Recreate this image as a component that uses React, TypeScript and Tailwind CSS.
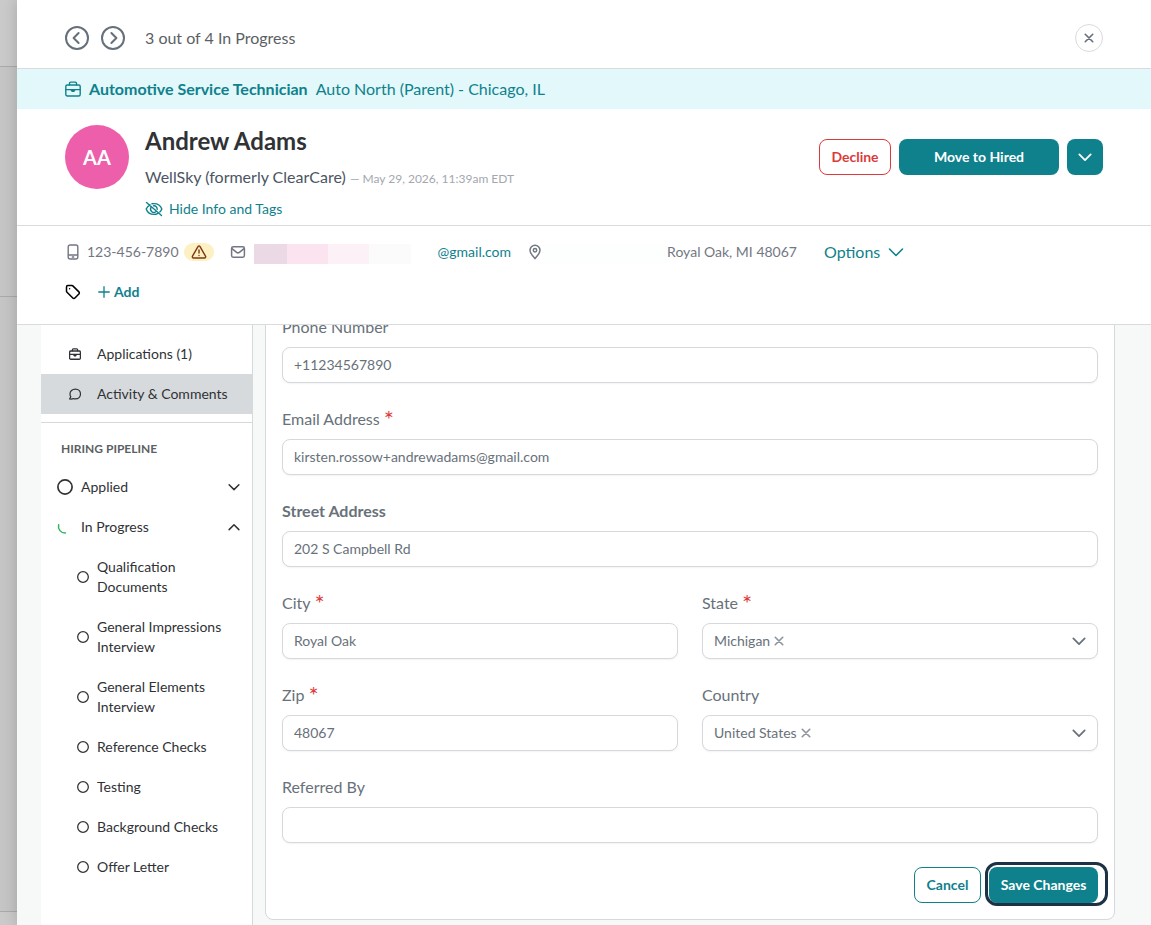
import { ReactNode } from 'react';

const stages = [
  'Qualification Documents',
  'General Impressions Interview',
  'General Elements Interview',
  'Reference Checks',
  'Testing',
  'Background Checks',
  'Offer Letter',
];

function Icon({ className, width = 1.5, children }: { className: string; width?: number; children: ReactNode }) {
  return (
    <svg
      viewBox="0 0 16 16"
      className={`shrink-0 ${className}`}
      fill="none"
      stroke="currentColor"
      strokeWidth={width}
      strokeLinecap="round"
      strokeLinejoin="round"
      aria-hidden="true"
    >
      {children}
    </svg>
  );
}

function Briefcase({ className, width = 1.4 }: { className: string; width?: number }) {
  return (
    <Icon className={className} width={width}>
      <rect x="0.8" y="4" width="14.4" height="11" rx="1.5" />
      <path d="M4.500 3.800V2.300a1.200 1.200 0 0 1 1.200-1.200h4.600a1.200 1.200 0 0 1 1.200 1.200v1.500M1 8.600h14" />
      <path d="M6.200 8.800h3.600L8.800 10.400H7.200z" fill="currentColor" />
    </Icon>
  );
}

function Chevron({ className, up, width = 1.6 }: { className: string; up?: boolean; width?: number }) {
  return (
    <Icon className={className} width={width}>
      <path d={up ? 'M1.500 11.500L8 5l6.500 6.500' : 'M1.500 5L8 11.500 14.500 5'} />
    </Icon>
  );
}

function Cross({ className }: { className: string }) {
  return (
    <Icon className={className} width={2.6}>
      <path d="M2 2l12 12M14 2L2 14" />
    </Icon>
  );
}

function Ring({ className }: { className: string }) {
  return (
    <Icon className={className} width={1.7}>
      <circle cx="8" cy="8" r="7.1" />
    </Icon>
  );
}

function Label({ id, text, required, bold }: { id: string; text: string; required?: boolean; bold?: boolean }) {
  return (
    <label htmlFor={id} className={`flex h-6 items-center gap-1 text-base leading-6 ${bold ? 'font-bold' : ''}`}>
      {text}
      {required && <span className="text-2xl leading-6 text-[#e03c3c]">*</span>}
    </label>
  );
}

type FieldProps = { id: string; label: string; value: string; required?: boolean; bold?: boolean };

function TextField({ id, label, value, required, bold }: FieldProps) {
  return (
    <div className="flex flex-col gap-2">
      <Label id={id} text={label} required={required} bold={bold} />
      <input
        id={id}
        defaultValue={value}
        className="h-9 w-full rounded-lg border border-[#d5d8dc] bg-white px-[11px] pb-[2px] text-sm shadow-xs"
      />
    </div>
  );
}

function SelectField({ id, label, value, required }: FieldProps) {
  return (
    <div className="flex flex-col gap-2">
      <Label id={id} text={label} required={required} />
      <div className="flex h-9 items-center rounded-lg border border-[#d5d8dc] bg-white px-[11px] text-sm shadow-xs">
        <select id={id} className="appearance-none bg-transparent [field-sizing:content]">
          <option>{value}</option>
        </select>
        <button type="button" aria-label={`Clear ${label}`} className="ml-1 text-[#8d949b]">
          <Cross className="size-[10px]" />
        </button>
        <Chevron className="ml-auto size-[14px]" width={2} />
      </div>
    </div>
  );
}

export default function App() {
  return (
    <div className="relative flex min-h-screen bg-[#c4c5c4] pl-[17px] font-['Lato',sans-serif] text-[#303236]">
      {/* page behind the drawer */}
      <div className="absolute inset-y-0 left-0 flex w-[17px] flex-col">
        <div className="h-[67px] border-b border-[#aaaaaa] bg-[#cacaca]" />
        <div className="h-[230px] border-b border-[#aaaaaa]" />
        <div className="flex-1" />
        <div className="h-[14px] border-t border-[#aaaaaa] bg-[#cacaca]" />
      </div>

      <section className="relative flex min-w-0 flex-1 flex-col bg-white shadow-[0_0_14px_rgba(0,0,0,0.18)]">
        <header className="flex items-center border-b border-[#d9dbdd] px-12 pt-6 pb-4">
          <div className="flex items-center gap-3 text-[#65707b]">
            <button type="button" aria-label="Previous">
              <svg viewBox="0 0 24 24" className="size-6" fill="none" stroke="currentColor" strokeWidth="2" strokeLinecap="round" strokeLinejoin="round">
                <circle cx="12" cy="12" r="11" />
                <path d="M13.600 7l-5 5 5 5" />
              </svg>
            </button>
            <button type="button" aria-label="Next">
              <svg viewBox="0 0 24 24" className="size-6" fill="none" stroke="currentColor" strokeWidth="2" strokeLinecap="round" strokeLinejoin="round">
                <circle cx="12" cy="12" r="11" />
                <path d="M10.400 7l5 5-5 5" />
              </svg>
            </button>
          </div>
          <p className="ml-5 text-base leading-6 text-[#5c5f64]">3 out of 4 In Progress</p>
          <button type="button" aria-label="Close" className="ml-auto flex size-7 items-center justify-center rounded-full border border-[#d9dbdd] text-[#65707b]">
            <Cross className="size-[10px]" />
          </button>
        </header>

        <div className="flex h-10 items-center gap-2 bg-[#e2f8fa] px-12 text-base text-[#0f818d]">
          <Briefcase className="size-4" />
          <strong className="font-bold">Automotive Service Technician</strong>
          <span>Auto North (Parent) - Chicago, IL</span>
        </div>

        <div className="flex gap-4 border-b border-[#d9dbdd] px-12 pt-4 pb-1">
          <div className="flex size-16 items-center justify-center rounded-full bg-[#ed5fab] text-xl font-bold text-white">AA</div>
          <div>
            <h1 className="text-2xl leading-8 font-bold">Andrew Adams</h1>
            <p className="mt-2 text-base leading-6 text-[#4b5563]">
              WellSky (formerly ClearCare) <span className="text-xs text-[#a3a8ae]">— May 29, 2026, 11:39am EDT</span>
            </p>
            <button type="button" className="mt-2 flex h-6 items-center gap-[6px] text-sm text-[#0f818d]">
              <svg viewBox="0 0 18 16" className="h-4 w-[18px]" fill="none" stroke="currentColor" strokeWidth="1.4" strokeLinecap="round" strokeLinejoin="round">
                <path d="M1.500 1.500l15 13M5 3.800C3.200 4.800 1.800 6.300 1.200 8c1.200 3.300 4.300 5.400 7.800 5.400 1.300 0 2.500-.3 3.600-.8M7 2.800c.6-.1 1.300-.2 2-.2 3.500 0 6.600 2.100 7.800 5.400-.4 1.100-1.100 2.100-2 2.900" />
                <path d="M6.200 6.200a3.300 3.300 0 0 0 4.600 4.600M8.600 4.800a3.300 3.300 0 0 1 3.600 3.600" />
              </svg>
              Hide Info and Tags
            </button>
          </div>
          <div className="ml-auto flex h-16 items-center gap-2 text-sm font-bold">
            <button type="button" className="h-9 w-18 rounded-lg border border-[#dc3a3a] text-[#dc3a3a]">Decline</button>
            <button type="button" className="h-9 w-40 rounded-lg bg-[#0f818d] text-white">Move to Hired</button>
            <button type="button" aria-label="More actions" className="flex size-9 items-center justify-center rounded-lg bg-[#0f818d] text-white">
              <Chevron className="size-[14px]" width={2} />
            </button>
          </div>
        </div>

        <div className="border-b border-[#d9dbdd] px-12 pt-[14px] pb-5">
          <div className="flex h-6 items-center text-sm text-[#737782]">
            <Icon className="size-4" width={1.4}>
              <rect x="3.200" y="1" width="9.600" height="14" rx="2" />
              <path d="M3.500 11h9M7.300 13h1.400" />
            </Icon>
            <span className="ml-[6px]">123-456-7890</span>
            <span className="ml-[5px] flex h-[18px] w-[30px] items-center justify-center rounded-full bg-[#fdf0c3] text-[#7c3a14]">
              <Icon className="size-4" width={1.4}>
                <path d="M7.100 2.400L1.500 12.200a1.200 1.200 0 0 0 1 1.800h11a1.200 1.200 0 0 0 1-1.800L8.900 2.400a1.100 1.100 0 0 0-1.800 0zM8 6v3M8 11.500v.1" />
              </Icon>
            </span>
            <Icon className="ml-4 size-4" width={1.5}>
              <rect x="1.600" y="2.800" width="12.800" height="10.400" rx="1.600" />
              <path d="M2 4.600l4.600 3.700a2.200 2.200 0 0 0 2.800 0L14 4.600" />
            </Icon>
            {/* redacted part of the address */}
            <span className="mt-1 ml-2 flex h-5 w-[184px]">
              <span className="w-[33px] bg-[#ecd9e6]" />
              <span className="w-[41px] bg-[#fbe3f0]" />
              <span className="w-[41px] bg-[#fcf1f7]" />
              <span className="w-[42px] bg-[#fcfbfc]" />
            </span>
            <a href="mailto:kirsten.rossow+andrewadams@gmail.com" className="text-[#0f818d]">@gmail.com</a>
            <Icon className="ml-4 size-4" width={1.5}>
              <path d="M8 14.600c-1.800-2.200-5-5.100-5-8.400a5 5 0 0 1 10 0c0 3.300-3.200 6.200-5 8.400z" />
              <circle cx="8" cy="6.300" r="1.700" />
            </Icon>
            <span className="mt-1 h-5 w-[124px] bg-[#fdfefe]" />
            <span>Royal Oak, MI 48067</span>
            <button type="button" className="ml-[27px] flex items-center gap-2 text-base text-[#0f818d]">
              Options
              <Chevron className="size-4" />
            </button>
          </div>
          <div className="mt-4 flex h-6 items-center">
            <Icon className="size-4 text-black" width={1.5}>
              <path d="M1.500 2.900v4.300c0 .4.200.8.500 1.100l5.800 5.700c.6.600 1.500.6 2.100 0l4-4c.6-.6.6-1.500 0-2.100L8.100 2.100c-.3-.3-.7-.5-1.100-.5H2.800c-.7 0-1.300.6-1.300 1.300zM4.600 4.700v.1" />
            </Icon>
            <button type="button" className="ml-4 flex items-center gap-[3px] text-sm font-bold text-[#0f818d]">
              <Icon className="size-[14px]">
                <path d="M8 2v12M2 8h12" />
              </Icon>
              Add
            </button>
          </div>
        </div>

        <div className="flex flex-1 overflow-hidden bg-[#f7f9f8] pr-9 pl-6">
          <nav className="w-53 shrink-0 border-r border-[#d5d8dc] bg-white pt-[9px] text-sm leading-5">
            <a href="#applications" className="flex h-10 items-center pl-7">
              <Briefcase className="size-3" width={1.7} />
              <span className="ml-4">Applications (1)</span>
            </a>
            <a href="#activity" className="flex h-10 items-center bg-[#d6dadd] pl-7">
              <Icon className="size-3" width={1.6}>
                <path d="M8.500 1.500C4.300 1.500 1.300 4.300 1.300 7.900c0 1.700.6 2.900 1.100 3.600L.8 14.600c2.500.4 4.100.1 5-.5.8.3 1.800.4 2.700.4 4.100 0 6.800-2.900 6.800-6.500s-2.800-6.500-6.800-6.500z" />
              </Icon>
              <span className="ml-4">Activity &amp; Comments</span>
            </a>
            <div className="mt-2 border-t border-[#d5d8dc] pt-4">
              <h2 className="pb-2 pl-5 text-xs leading-5 font-bold text-[#5c5f64]">HIRING PIPELINE</h2>
              <button type="button" className="flex h-10 w-full items-center gap-2 pr-3 pl-4">
                <Ring className="size-4" />
                Applied
                <Chevron className="ml-auto size-3" width={2} />
              </button>
              <button type="button" className="flex h-10 w-full items-center gap-2 pr-3 pl-4">
                <Icon className="size-4 text-[#32b25e]" width={1.5}>
                  <path d="M1.600 5.800a6.800 6.800 0 0 0 6.800 8.300" />
                </Icon>
                In Progress
                <Chevron className="ml-auto size-3" width={2} up />
              </button>
              <ul>
                {stages.map((stage) => (
                  <li key={stage} className="flex items-center gap-2 py-[10px] pr-5 pl-9">
                    <Ring className="size-3" />
                    {stage}
                  </li>
                ))}
              </ul>
            </div>
          </nav>

          <div className="min-w-0 flex-1 pb-[5px] pl-3">
            {/* the form is scrolled a little under the header */}
            <form className="-mt-4 flex flex-col gap-6 rounded-lg border border-[#d5d8dc] bg-white px-4 pt-[5px] pb-4 text-[#68717a]" onSubmit={(e) => e.preventDefault()}>
              <TextField id="phone" label="Phone Number" value="+11234567890" />
              <TextField id="email" label="Email Address" value="kirsten.rossow+andrewadams@gmail.com" required />
              <TextField id="street" label="Street Address" value="202 S Campbell Rd" bold />
              <div className="grid grid-cols-2 gap-6">
                <TextField id="city" label="City" value="Royal Oak" required />
                <SelectField id="state" label="State" value="Michigan" required />
                <TextField id="zip" label="Zip" value="48067" required />
                <SelectField id="country" label="Country" value="United States" />
              </div>
              <TextField id="referred" label="Referred By" value="" />
              <div className="flex justify-end gap-2 text-sm font-bold">
                <button type="button" className="h-9 w-[67px] rounded-lg border border-[#0f818d] text-[#0f818d]">Cancel</button>
                <button type="submit" className="relative h-9 w-[109px] rounded-lg bg-[#0f818d] text-white">
                  Save Changes
                  {/* focus ring */}
                  <span className="absolute -top-[5px] -right-[10px] -bottom-[3px] -left-1 rounded-xl border-3 border-[#1d3245]" />
                </button>
              </div>
            </form>
          </div>
        </div>
      </section>
    </div>
  );
}
